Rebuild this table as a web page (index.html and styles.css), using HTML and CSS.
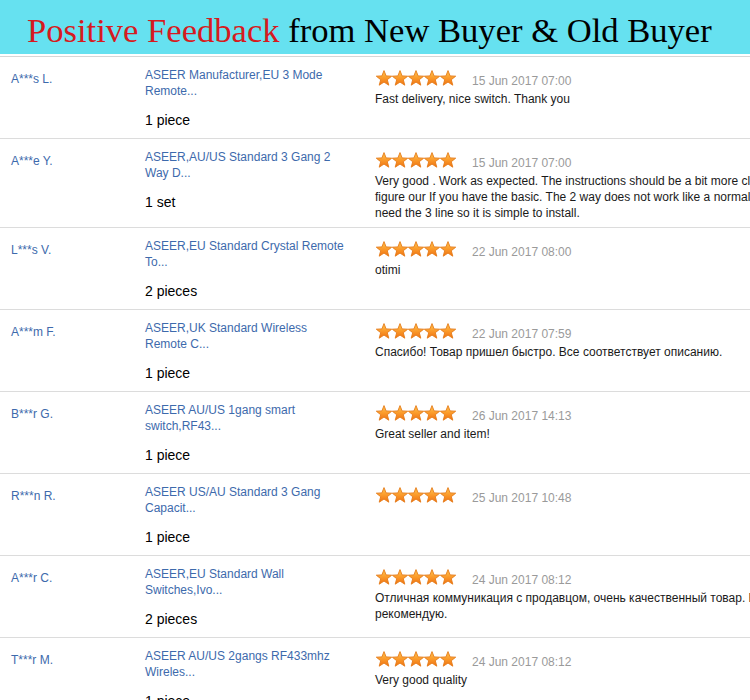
FILE: index.html
```html
<!DOCTYPE html>
<html>
<head>
<meta charset="utf-8">
<link rel="stylesheet" href="styles.css">
</head>
<body>
<svg class="defs" width="0" height="0" aria-hidden="true">
  <defs>
    <linearGradient id="starGrad" x1="0" y1="0" x2="0" y2="1">
      <stop offset="0" stop-color="#ffc64f"/>
      <stop offset="0.5" stop-color="#fb9b2b"/>
      <stop offset="1" stop-color="#ef7212"/>
    </linearGradient>
    <path id="star" d="M8 0.6 L10.1 5.9 L15.7 6.2 L11.3 9.7 L12.8 15.2 L8 12.1 L3.2 15.2 L4.7 9.7 L0.3 6.2 L5.9 5.9Z" fill="url(#starGrad)" stroke="#e47a18" stroke-width="0.9" stroke-linejoin="round"/>
  </defs>
</svg>
<div class="page">
  <header class="banner">
    <h1><span class="red">Positive Feedback</span> from New Buyer &amp; Old Buyer</h1>
  </header>
  <div class="list">
    <div class="row">
      <div class="name">A***s L.</div>
      <div class="product"><a class="plink">ASEER Manufacturer,EU 3 Mode<br>Remote...</a><div class="qty">1 piece</div></div>
      <div class="review">
        <div class="meta"><svg class="stars" viewBox="0 0 80 16"><use href="#star" x="0"/><use href="#star" x="16"/><use href="#star" x="32"/><use href="#star" x="48"/><use href="#star" x="64"/></svg><span class="date">15 Jun 2017 07:00</span></div>
        <p class="comment">Fast delivery, nice switch. Thank you</p>
      </div>
    </div>
    <div class="row">
      <div class="name">A***e Y.</div>
      <div class="product"><a class="plink">ASEER,AU/US Standard 3 Gang 2<br>Way D...</a><div class="qty">1 set</div></div>
      <div class="review">
        <div class="meta"><svg class="stars" viewBox="0 0 80 16"><use href="#star" x="0"/><use href="#star" x="16"/><use href="#star" x="32"/><use href="#star" x="48"/><use href="#star" x="64"/></svg><span class="date">15 Jun 2017 07:00</span></div>
        <p class="comment">Very good . Work as expected. The instructions should be a bit more clear but easy to<br>figure our If you have the basic. The 2 way does not work like a normal 2 way you<br>need the 3 line so it is simple to install.</p>
      </div>
    </div>
    <div class="row">
      <div class="name">L***s V.</div>
      <div class="product"><a class="plink">ASEER,EU Standard Crystal Remote<br>To...</a><div class="qty">2 pieces</div></div>
      <div class="review">
        <div class="meta"><svg class="stars" viewBox="0 0 80 16"><use href="#star" x="0"/><use href="#star" x="16"/><use href="#star" x="32"/><use href="#star" x="48"/><use href="#star" x="64"/></svg><span class="date">22 Jun 2017 08:00</span></div>
        <p class="comment">otimi</p>
      </div>
    </div>
    <div class="row">
      <div class="name">A***m F.</div>
      <div class="product"><a class="plink">ASEER,UK Standard Wireless<br>Remote C...</a><div class="qty">1 piece</div></div>
      <div class="review">
        <div class="meta"><svg class="stars" viewBox="0 0 80 16"><use href="#star" x="0"/><use href="#star" x="16"/><use href="#star" x="32"/><use href="#star" x="48"/><use href="#star" x="64"/></svg><span class="date">22 Jun 2017 07:59</span></div>
        <p class="comment">Спасибо! Товар пришел быстро. Все соответствует описанию.</p>
      </div>
    </div>
    <div class="row">
      <div class="name">B***r G.</div>
      <div class="product"><a class="plink">ASEER AU/US 1gang smart<br>switch,RF43...</a><div class="qty">1 piece</div></div>
      <div class="review">
        <div class="meta"><svg class="stars" viewBox="0 0 80 16"><use href="#star" x="0"/><use href="#star" x="16"/><use href="#star" x="32"/><use href="#star" x="48"/><use href="#star" x="64"/></svg><span class="date">26 Jun 2017 14:13</span></div>
        <p class="comment">Great seller and item!</p>
      </div>
    </div>
    <div class="row">
      <div class="name">R***n R.</div>
      <div class="product"><a class="plink">ASEER US/AU Standard 3 Gang<br>Capacit...</a><div class="qty">1 piece</div></div>
      <div class="review">
        <div class="meta"><svg class="stars" viewBox="0 0 80 16"><use href="#star" x="0"/><use href="#star" x="16"/><use href="#star" x="32"/><use href="#star" x="48"/><use href="#star" x="64"/></svg><span class="date">25 Jun 2017 10:48</span></div>
        <p class="comment"></p>
      </div>
    </div>
    <div class="row">
      <div class="name">A***r C.</div>
      <div class="product"><a class="plink">ASEER,EU Standard Wall<br>Switches,Ivo...</a><div class="qty">2 pieces</div></div>
      <div class="review">
        <div class="meta"><svg class="stars" viewBox="0 0 80 16"><use href="#star" x="0"/><use href="#star" x="16"/><use href="#star" x="32"/><use href="#star" x="48"/><use href="#star" x="64"/></svg><span class="date">24 Jun 2017 08:12</span></div>
        <p class="comment">Отличная коммуникация с продавцом, очень качественный товар. Всем<br>рекомендую.</p>
      </div>
    </div>
    <div class="row">
      <div class="name">T***r M.</div>
      <div class="product"><a class="plink">ASEER AU/US 2gangs RF433mhz<br>Wireles...</a><div class="qty">1 piece</div></div>
      <div class="review">
        <div class="meta"><svg class="stars" viewBox="0 0 80 16"><use href="#star" x="0"/><use href="#star" x="16"/><use href="#star" x="32"/><use href="#star" x="48"/><use href="#star" x="64"/></svg><span class="date">24 Jun 2017 08:12</span></div>
        <p class="comment">Very good quality</p>
      </div>
    </div>
  </div>
</div>
</body>
</html>
```
FILE: styles.css
```css
html, body {
  margin: 0;
  padding: 0;
  background: #fff;
  overflow: hidden;
}
.defs {
  display: block;
  width: 0;
  height: 0;
  overflow: hidden;
}
.page {
  width: 750px;
  height: 700px;
  overflow: hidden;
  font-family: "Liberation Sans", Arial, sans-serif;
}
.banner {
  height: 54px;
  background: #66e1f0;
  margin-bottom: 2px;
  padding: 13px 0 0 27px;
  box-sizing: border-box;
}
.banner h1 {
  margin: 0;
  font-family: "Liberation Serif", "Times New Roman", serif;
  font-weight: normal;
  font-size: 34.6px;
  color: #000;
  white-space: nowrap;
  line-height: 34px;
}
.banner .red {
  color: #d61a20;
}
.list {
  border-top: 1px solid #d6d6d6;
}
.row {
  display: grid;
  grid-template-columns: 145px 230px 1fr;
  padding: 10px 0 6px;
  border-bottom: 1px solid #dcdcdc;
}
.name {
  padding: 4px 0 0 11px;
  font-size: 12px;
  line-height: 16px;
  color: #3d6aac;
}
.product {
  padding-bottom: 3px;
}
.plink {
  display: block;
  font-size: 12px;
  line-height: 16px;
  color: #3d6aac;
  white-space: nowrap;
}
.qty {
  margin-top: 12px;
  font-size: 14px;
  line-height: 18px;
  color: #000;
}
.review {
  padding-top: 3px;
  min-width: 0;
}
.meta {
  display: flex;
  align-items: flex-end;
  gap: 16px;
  height: 16px;
  padding-left: 1px;
  margin-bottom: 5px;
}
.stars {
  width: 80px;
  height: 16px;
  display: block;
  flex: none;
}
.date {
  font-size: 12px;
  line-height: 14px;
  margin-bottom: -2px;
  color: #9a9a9a;
  white-space: nowrap;
}
.comment {
  margin: 0;
  font-size: 12px;
  line-height: 16px;
  color: #1a1a1a;
  white-space: nowrap;
}
```
